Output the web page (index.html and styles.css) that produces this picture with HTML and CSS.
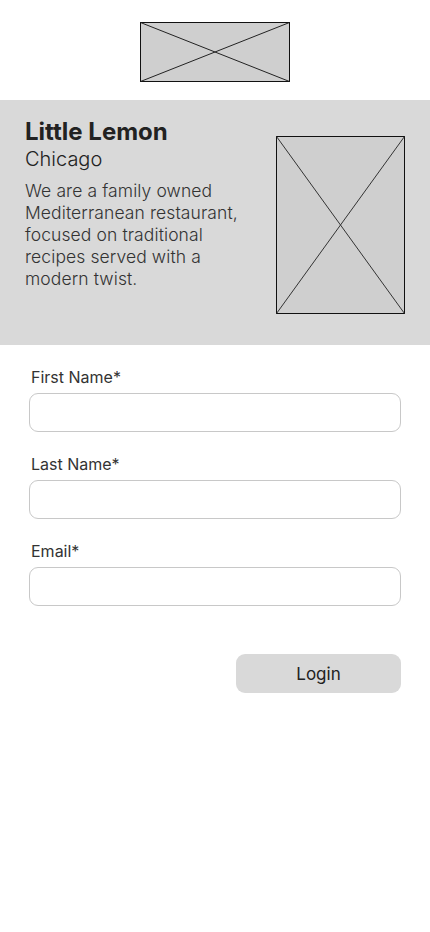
FILE: index.html
```html
<!DOCTYPE html>
<html lang="en">
<head>
<meta charset="utf-8">
<title>Little Lemon</title>
<link rel="stylesheet" href="styles.css">
</head>
<body>
<header class="header">
  <svg class="logo" width="150" height="60" viewBox="0 0 150 60">
    <rect x="0.5" y="0.5" width="149" height="59" fill="#cfcfcf" stroke="#111" stroke-width="1"/>
    <line x1="0.5" y1="0.5" x2="149.5" y2="59.5" stroke="#222" stroke-width="1"/>
    <line x1="149.5" y1="0.5" x2="0.5" y2="59.5" stroke="#222" stroke-width="1"/>
  </svg>
</header>
<section class="hero">
  <div class="hero-text">
    <h1 class="hero-title">Little Lemon</h1>
    <h2 class="hero-city">Chicago</h2>
    <p class="hero-desc">We are a family owned Mediterranean restaurant, focused on traditional recipes served with a modern twist.</p>
  </div>
  <svg class="hero-img" width="129" height="178" viewBox="0 0 129 178">
    <rect x="0.5" y="0.5" width="128" height="177" fill="#cfcfcf" stroke="#111" stroke-width="1"/>
    <line x1="0.5" y1="0.5" x2="128.5" y2="177.5" stroke="#333" stroke-width="1"/>
    <line x1="128.5" y1="0.5" x2="0.5" y2="177.5" stroke="#333" stroke-width="1"/>
  </svg>
</section>
<form class="form">
  <label class="field">
    <span class="label">First Name*</span>
    <input class="input" type="text">
  </label>
  <label class="field">
    <span class="label">Last Name*</span>
    <input class="input" type="text">
  </label>
  <label class="field">
    <span class="label">Email*</span>
    <input class="input" type="email">
  </label>
  <div class="actions">
    <button class="login" type="button">Login</button>
  </div>
</form>
</body>
</html>
```
FILE: styles.css
```css
* { box-sizing: border-box; }
html, body { margin: 0; padding: 0; background: #fff; }
body {
  width: 430px;
  min-height: 932px;
  font-family: Inter, "Noto Sans", sans-serif;
  color: #333;
}
.header {
  display: flex;
  justify-content: center;
  padding: 22px 0 18px;
}
.logo { display: block; }
.hero {
  background: #d9d9d9;
  height: 245px;
  display: flex;
  justify-content: space-between;
  align-items: flex-start;
  padding: 0 25px;
}
.hero-text {
  width: 236px;
  padding-top: 17px;
}
.hero-title {
  margin: 0;
  font-size: 24px;
  line-height: 30px;
  font-weight: 700;
  color: #222;
}
.hero-city {
  margin: 0;
  font-size: 20px;
  line-height: 24px;
  font-weight: 300;
  color: #222;
}
.hero-desc {
  margin: 9px 0 0;
  font-size: 17.5px;
  line-height: 22px;
  font-weight: 300;
  letter-spacing: 0.1px;
  color: #333;
}
.hero-img {
  display: block;
  margin-top: 36px;
}
.form {
  display: flex;
  flex-direction: column;
  gap: 22px;
  padding: 22px 29px 0;
}
.field {
  display: flex;
  flex-direction: column;
  gap: 6px;
}
.label {
  padding-left: 2px;
  font-size: 16px;
  line-height: 20px;
  color: #333;
}
.input {
  width: 372px;
  height: 39px;
  border: 1px solid #c8c8c8;
  border-radius: 9px;
  background: #fff;
  font-family: inherit;
  font-size: 16px;
  padding: 0 10px;
}
.actions {
  display: flex;
  justify-content: flex-end;
  padding-top: 26px;
}
.login {
  width: 165px;
  height: 39px;
  border: none;
  border-radius: 9px;
  background: #d9d9d9;
  font-family: inherit;
  font-size: 17px;
  color: #222;
}
```
